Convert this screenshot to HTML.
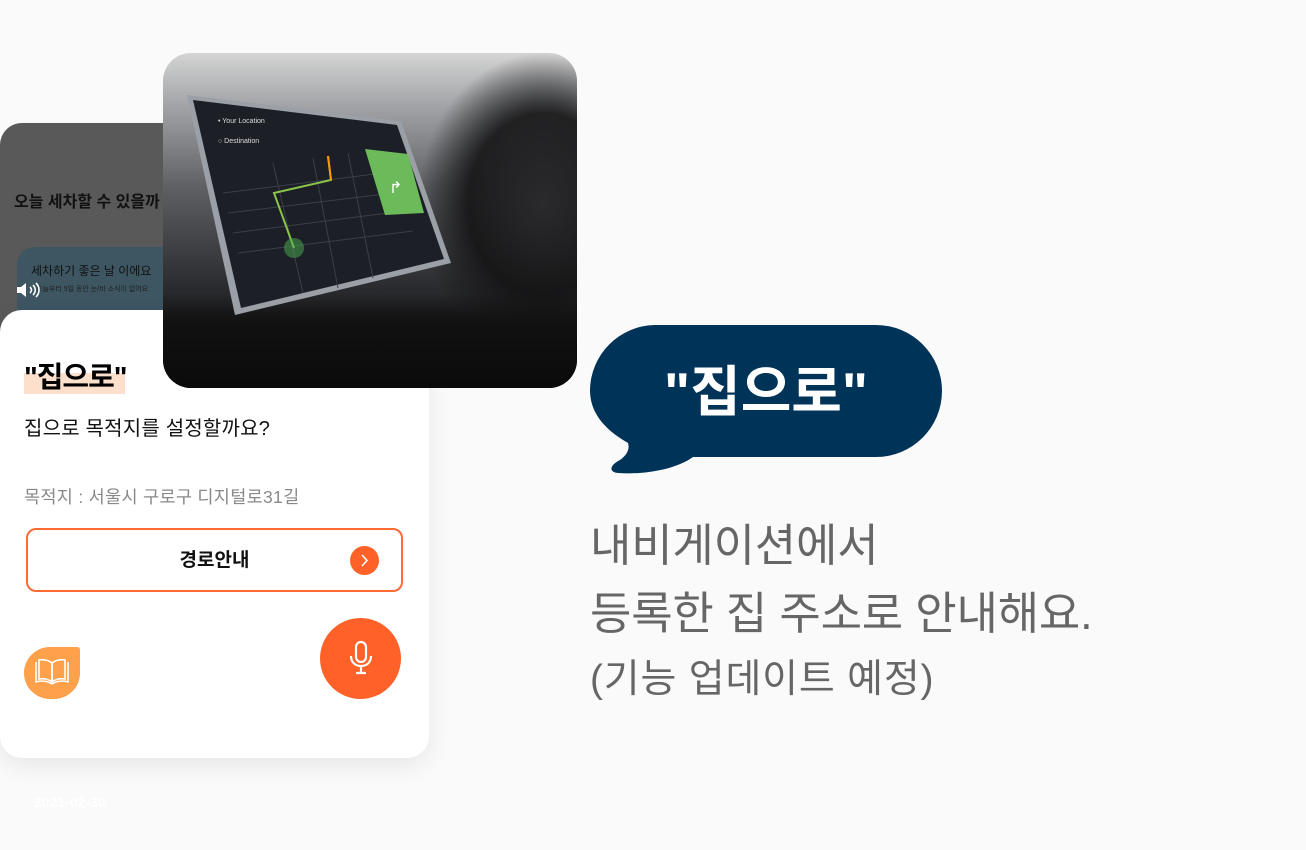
<!DOCTYPE html>
<html><head><meta charset="utf-8"><style>
*{margin:0;padding:0;box-sizing:border-box}
body{width:1306px;height:850px;background:#fafafa;position:relative;overflow:hidden;font-family:"Liberation Sans","Noto Sans CJK KR",sans-serif}
.abs{position:absolute}
.gray{left:0;top:123px;width:200px;height:220px;background:#595959;border-top-left-radius:22px}
.teal{left:17px;top:247px;width:170px;height:80px;background:#3d5661;border-radius:18px}
.card{left:0;top:310px;width:429px;height:448px;background:#fff;border-radius:22px;box-shadow:0 8px 24px rgba(0,0,0,.08)}
.photo{left:163px;top:53px;width:414px;height:335px;border-radius:28px;overflow:hidden;background:linear-gradient(180deg,#d4d4d4 0%,#a4a6a9 15%,#5e6064 40%,#2a2b2e 70%,#121214 100%)}
</style></head><body>
<div class="abs gray"></div>
<div class="abs" style="left:14px;top:188px;font-size:16px;font-weight:bold;color:#111;white-space:nowrap">오늘 세차할 수 있을까</div>
<div class="abs teal"></div>
<div class="abs" style="left:31px;top:262px;font-size:12px;color:#111;white-space:nowrap">세차하기 좋은 날 이에요</div>
<div class="abs" style="left:36px;top:284px;font-size:7px;color:#222;white-space:nowrap">오늘부터 5일 동안 눈/비 소식이 없어요</div>
<svg class="abs" style="left:16px;top:281px" width="26" height="18" viewBox="0 0 26 18" fill="#fff" stroke="#fff" stroke-width="1.6"><path d="M1 6h4l5-4v14l-5-4H1z" stroke="none"/><path d="M14 6c2 2 2 4 0 6M17 4c3 3 3 7 0 10M20 2c4 4 4 10 0 14" fill="none"/></svg>

<div class="abs card"></div>
<div class="abs" style="left:24px;top:373px;width:101px;height:21px;background:#fde0cc"></div>
<div class="abs" style="left:24px;top:354px;font-size:29px;font-weight:bold;color:#000;letter-spacing:-1px">"집으로"</div>
<div class="abs" style="left:24px;top:412px;font-size:20px;color:#111;letter-spacing:0.2px">집으로 목적지를 설정할까요?</div>
<div class="abs" style="left:24px;top:484px;font-size:17.5px;color:#888;letter-spacing:0.3px">목적지 : 서울시 구로구 디지털로31길</div>
<div class="abs" style="left:26px;top:528px;width:377px;height:64px;border:2px solid #ff6a35;border-radius:10px"></div>
<div class="abs" style="left:26px;top:545px;width:377px;text-align:center;font-size:19px;font-weight:bold;color:#111">경로안내</div>
<div class="abs" style="left:350px;top:546px;width:29px;height:29px;border-radius:50%;background:#ff6128"></div>
<svg class="abs" style="left:350px;top:546px" width="29" height="29" fill="none" stroke="#fff" stroke-width="1.6"><path d="M12 9l5 5.5-5 5.5"/></svg>
<div class="abs" style="left:24px;top:647px;width:56px;height:52px;background:#ffa04a;border-radius:28px 3px 28px 28px"></div>
<svg class="abs" style="left:33px;top:658px" width="38" height="28" viewBox="0 0 38 28" fill="none" stroke="#fff" stroke-width="1.6"><path d="M3 4v20c6-2 11-1 16 2 5-3 10-4 16-2V4"/><path d="M6 2v19c5-1 9 0 13 3V5C15 2 11 1 6 2z"/><path d="M32 2v19c-5-1-9 0-13 3V5c4-3 8-4 13-3z"/></svg>
<div class="abs" style="left:320px;top:618px;width:81px;height:81px;border-radius:50%;background:#ff6128"></div>
<svg class="abs" style="left:346px;top:640px" width="30" height="36" viewBox="0 0 30 36" fill="none" stroke="#fff" stroke-width="2.2"><rect x="10" y="2" width="10" height="20" rx="5"/><path d="M5 16c0 6 4 10 10 10s10-4 10-10M15 26v7M10 33h10"/></svg>
<div class="abs" style="left:34px;top:794px;font-size:14px;font-weight:bold;color:#fff">2021-02-30</div>

<div class="abs photo">
 <div class="abs" style="left:230px;top:0;width:250px;height:335px;background:radial-gradient(ellipse 50% 45% at 60% 45%,rgba(40,40,42,.95) 0%,rgba(20,20,21,.9) 60%,rgba(20,20,21,0) 100%)"></div>
 <div class="abs" style="left:0;top:240px;width:414px;height:100px;background:linear-gradient(180deg,rgba(26,26,28,0),#111 30%,#0a0a0a)"></div>
 <svg class="abs" style="left:0;top:0" width="414" height="335">
  <polygon points="24,42 238,68 288,210 72,262" fill="#9aa0a6"/>
  <polygon points="30,47 234,72 281,206 78,255" fill="#1c1f26"/>
  <text x="55" y="70" font-size="7" fill="#ddd" font-family="Liberation Sans">• Your Location</text>
  <text x="55" y="90" font-size="7" fill="#ddd" font-family="Liberation Sans">○ Destination</text>
  <g stroke="#3a3f48" stroke-width="1" fill="none">
   <path d="M60 140 L220 120 M65 160 L230 140 M70 180 L240 158 M75 200 L250 178 M110 110 L140 240 M150 105 L175 235 M185 100 L210 225"/>
  </g>
  <path d="M165 103 L168 127 L111 140 L131 195" stroke="#8bc34a" stroke-width="2" fill="none"/>
  <path d="M165 103 L168 127" stroke="#ff9800" stroke-width="2"/>
  <circle cx="131" cy="195" r="10" fill="#4caf50" opacity=".5"/>
  <polygon points="202,96 245,101 261,160 222,162" fill="#6cbb5a"/>
  <text x="226" y="140" font-size="16" fill="#fff" font-family="Liberation Sans">↱</text>
 </svg>
</div>

<svg class="abs" style="left:588px;top:323px" width="360" height="155"><path d="M67 2 H288 A66 66 0 0 1 288 134 H105 C90 145 60 152 30 150 C20 149 22 142 32 137 C39 132 42 126 40 120 C14 105 2 88 2 67 A66 66 0 0 1 67 2 Z" fill="#003358"/></svg>
<div class="abs" style="left:590px;top:347px;width:352px;text-align:center;font-size:55px;font-weight:bold;color:#fff;letter-spacing:0">"집으로"</div>
<div class="abs" style="left:590px;top:512px;font-size:45px;color:#666;letter-spacing:-0.2px;line-height:68px">내비게이션에서<br>등록한 집 주소로 안내해요.</div>
<div class="abs" style="left:590px;top:648px;font-size:39px;color:#666;letter-spacing:0.8px">(기능 업데이트 예정)</div>
</body></html>
